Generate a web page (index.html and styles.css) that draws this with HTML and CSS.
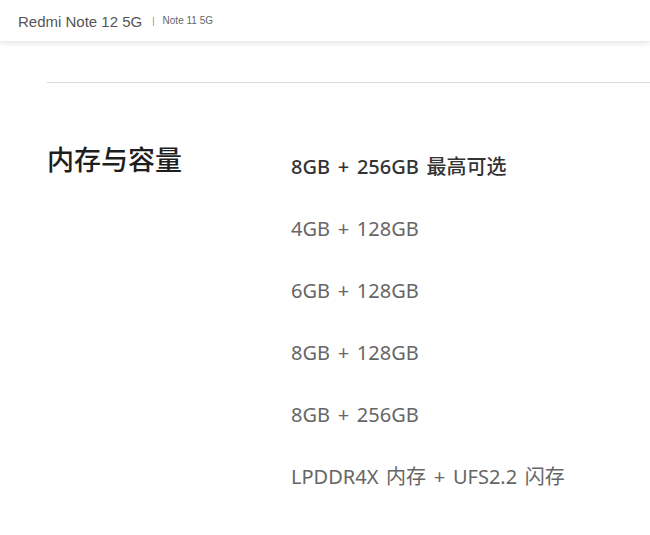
FILE: index.html
```html
<!DOCTYPE html>
<html lang="zh-CN">
<head>
  <meta charset="UTF-8">
  <title>Redmi Note 12 5G</title>
  <link rel="stylesheet" href="styles.css">
</head>
<body>

  <!-- 顶部导航 -->
  <div class="topbar">
    <span class="product">Redmi Note 12 5G</span>
    <span class="sep">|</span>
    <span class="sub">Note 11 5G</span>
  </div>

  <!-- 参数区 -->
  <div class="spec">
    <div class="spec-row">
      <h2 class="spec-title">内存与容量</h2>
      <ul class="spec-list">
        <li class="main">8GB + 256GB 最高可选</li>
        <li>4GB + 128GB</li>
        <li>6GB + 128GB</li>
        <li>8GB + 128GB</li>
        <li>8GB + 256GB</li>
        <li>LPDDR4X 内存 + UFS2.2 闪存</li>
      </ul>
    </div>
  </div>

</body>
</html>
```

FILE: styles.css
```css
body {
  margin: 0;
  background: #fff;
  font-family: "Noto Sans", "Noto Sans CJK SC", sans-serif;
}
.topbar {
  height: 41px;
  display: flex;
  align-items: center;
  padding: 0 18px;
  background: #fff;
  box-shadow: 0 2px 6px rgba(0,0,0,0.12);
  font-family: "Liberation Sans", Arial, sans-serif;
  color: #555;
}
.product {
  font-size: 15px;
  padding-top: 2px;
}
.sep {
  font-size: 9px;
  color: #888;
  margin: 0 8px 0 10px;
}
.sub {
  font-size: 10px;
  color: #666;
}
.spec {
  margin: 41px 0 0 47px;
  border-top: 1px solid #d8d8d8;
}
.spec-row {
  display: flex;
  padding-top: 55px;
}
.spec-title {
  width: 244px;
  margin: 0;
  font-size: 27px;
  font-weight: 500;
  color: #1e1e1e;
  line-height: 44px;
}
.spec-list {
  list-style: none;
  margin: 0;
  padding: 16px 0 0;
}
.spec-list li {
  font-size: 20px;
  line-height: 26px;
  margin-bottom: 36px;
  word-spacing: 2.5px;
  color: #666;
}
.spec-list li.main {
  color: #333;
  font-weight: 500;
}
```
